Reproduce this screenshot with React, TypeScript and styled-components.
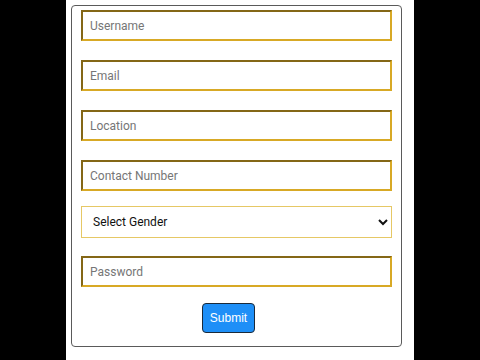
import { createGlobalStyle, styled } from "styled-components";

const GlobalStyle = createGlobalStyle`
  html, body {
    margin: 0;
    padding: 0;
    background: #000;
    height: 100%;
  }
  #root {
    height: 100%;
  }
`;

const Page = styled.div`
  display: flex;
  justify-content: flex-start;
  height: 360px;
  padding-left: 66px;
`;

const Column = styled.div`
  width: 348px;
  height: 100%;
  background: #fff;
  padding: 5px 0 0 5px;
  box-sizing: border-box;
`;

const Card = styled.form`
  width: 331px;
  height: 342px;
  box-sizing: border-box;
  border: 1px solid #5a5a5a;
  border-radius: 4px;
  padding: 4px 9px 0 9px;
  display: flex;
  flex-direction: column;
`;

const Field = styled.input`
  display: block;
  width: 100%;
  height: 31px;
  box-sizing: border-box;
  border: 2px inset #d8a925;
  padding: 0 7px;
  margin-bottom: 19px;
  font-family: Roboto, "Liberation Sans", sans-serif;
  font-size: 12px;
  color: #222;
  background: #fff;
  outline: none;

  &::placeholder {
    color: #767676;
  }
`;

const Select = styled.select`
  display: block;
  width: 100%;
  height: 32px;
  box-sizing: border-box;
  border: 1px solid #e6c865;
  border-radius: 0;
  padding: 0 7px;
  margin-top: -4px;
  margin-bottom: 18px;
  font-family: Roboto, "Liberation Sans", sans-serif;
  font-size: 12px;
  color: #111;
  background: #fff;
  outline: none;
`;

const SubmitButton = styled.button`
  align-self: flex-start;
  margin-left: 121px;
  margin-top: -3px;
  width: 53px;
  height: 30px;
  box-sizing: border-box;
  background: #1e8ff7;
  color: #fff;
  border: 1px solid #1b2a3a;
  border-radius: 4px;
  font-family: "Liberation Sans", Arial, sans-serif;
  font-size: 12px;
  font-weight: normal;
  cursor: pointer;
`;

export default function App() {
  return (
    <>
      <GlobalStyle />
      <Page>
        <Column>
          <Card onSubmit={(e) => e.preventDefault()}>
            <Field type="text" placeholder="Username" />
            <Field type="email" placeholder="Email" />
            <Field type="text" placeholder="Location" />
            <Field type="text" placeholder="Contact Number" />
            <Select defaultValue="">
              <option value="">Select Gender</option>
              <option value="male">Male</option>
              <option value="female">Female</option>
              <option value="other">Other</option>
            </Select>
            <Field type="password" placeholder="Password" />
            <SubmitButton type="submit">Submit</SubmitButton>
          </Card>
        </Column>
      </Page>
    </>
  );
}
